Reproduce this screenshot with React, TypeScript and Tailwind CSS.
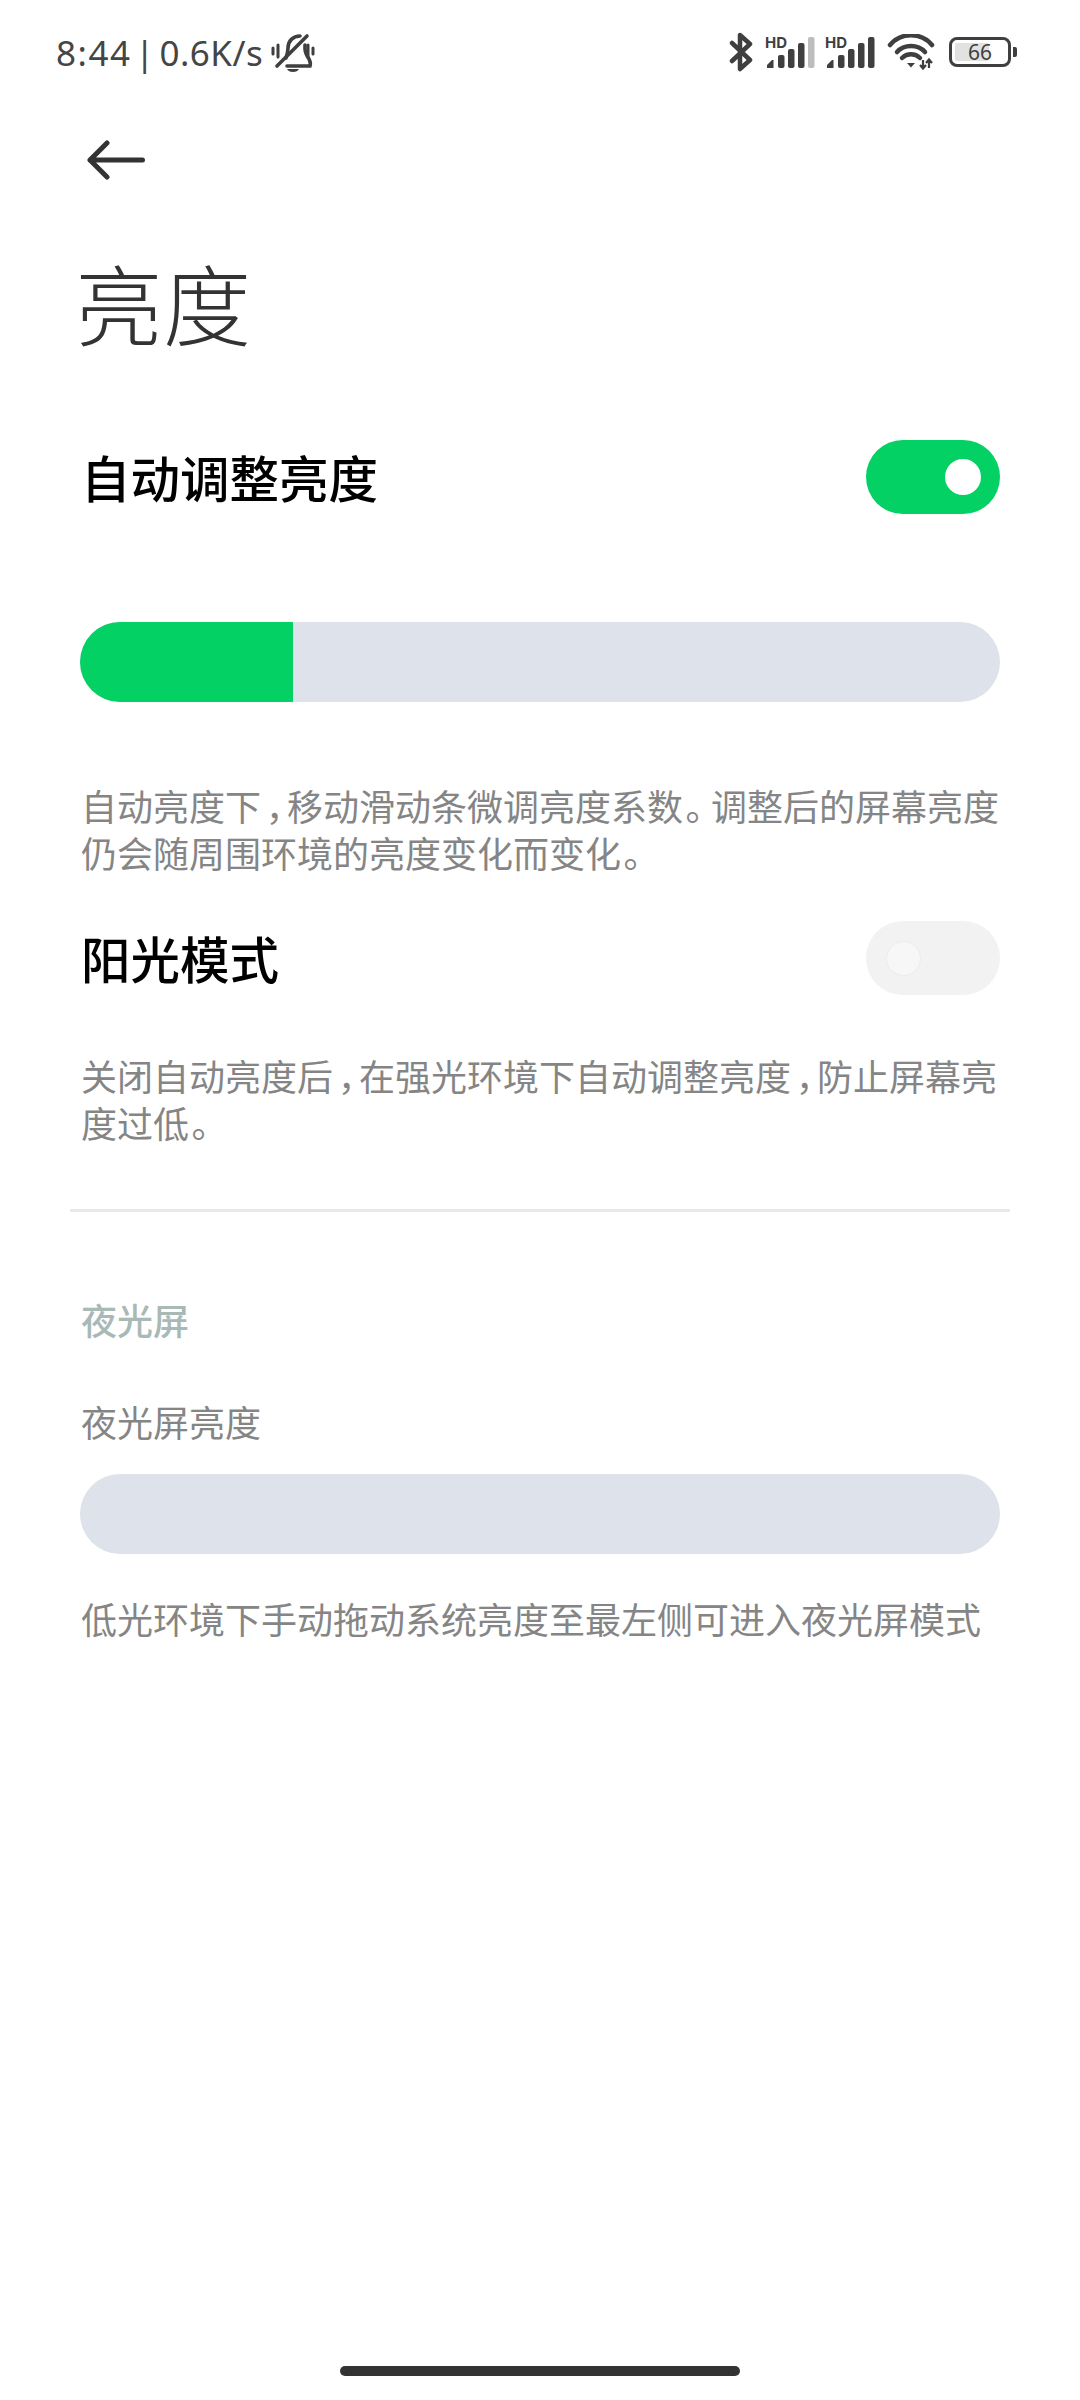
import type { ReactNode } from "react";

const CJK = "font-['Noto_Sans_CJK_SC','Noto_Sans',sans-serif]";

// the reference font has narrow CJK punctuation
function Comma() {
  return <span className="inline-block w-[26px] pl-[7px] [font-feature-settings:'palt']">，</span>;
}

function Period() {
  return <span className="inline-block w-[28px] pl-[2px] [font-feature-settings:'palt']">。</span>;
}

function MuteBell() {
  return (
    <svg width="46" height="42" viewBox="0 0 46 42" fill="none" stroke="#3f3f3f" strokeLinecap="round">
      <path d="M3 17v6M8 14v12M38 14v12M43 17v6" strokeWidth="3" />
      <path d="M16 27c1-3 2-6 2-10 0-7 5-12 12-12M35 14v4c0 4 2 7 4 10 1 2 2 4 1 7H17" strokeWidth="3.600" />
      <path d="M7 35 37 5" strokeWidth="3.600" />
      <path d="M17 38h12c-1 2-3 3-6 3s-5-1-6-3z" fill="#3f3f3f" stroke="none" />
    </svg>
  );
}

function Bluetooth() {
  return (
    <svg width="24" height="40" viewBox="0 0 24 40" fill="none" stroke="#3f3f3f" strokeWidth="4.500" strokeLinecap="round" strokeLinejoin="round">
      <path d="M3 11 21 28 11 37V3l10 9L3 29" />
    </svg>
  );
}

function Signal({ faded }: { faded?: boolean }) {
  const bars = [
    { x: 13, h: 13 },
    { x: 23, h: 19 },
    { x: 33, h: 25 },
  ];
  return (
    <svg width="50" height="34" viewBox="0 0 50 34" className="overflow-visible">
      <text x="0" y="13" fontFamily="Inter, sans-serif" fontWeight="700" fontSize="15" fill="#3f3f3f">HD</text>
      <path d="M2 33v-3l5-5h1.500v8z" fill="#3f3f3f" />
      {bars.map((b) => (
        <rect key={b.x} x={b.x} y={33 - b.h} width="6.500" height={b.h} rx="2" fill="#3f3f3f" />
      ))}
      <rect x="43" y="2" width="6.500" height="31" rx="2" fill={faded ? "#bdbdbd" : "#3f3f3f"} />
    </svg>
  );
}

function Wifi() {
  return (
    <svg width="48" height="36" viewBox="0 0 48 36" fill="none" stroke="#3f3f3f" strokeWidth="4.500" strokeLinecap="round">
      <path d="M3 11C14-2 34-2 45 11" />
      <path d="M10 18C17 10 31 10 38 18" />
      <path d="M15 24C20 19 28 19 33 24" />
      <path d="M20 29h8l-4 4.500z" fill="#3f3f3f" stroke="none" />
      <path d="M36 26v8M33 31l3 3.500 3-3.500M42 34v-8M39 29l3-3.500 3 3.500" strokeWidth="2.200" strokeLinecap="butt" />
    </svg>
  );
}

function Battery() {
  return (
    <div className="flex items-center gap-[2px]">
      <div className="relative w-[62px] h-[30px] rounded-[8px] border-[3.5px] border-[#3f3f3f] p-[3px]">
        <div className="h-full w-[34px] rounded-[2px] bg-[#e2e2e2]" />
        <span className="absolute inset-0 flex items-center justify-center font-['Noto_Sans',sans-serif] text-[21px] leading-none text-[#3f3f3f]">
          66
        </span>
      </div>
      <div className="w-[4px] h-[10px] rounded-r-[2px] bg-[#3f3f3f]" />
    </div>
  );
}

function Toggle({ on }: { on?: boolean }) {
  return (
    <div
      className={
        on
          ? "w-[134px] h-[74px] rounded-full bg-[#03d164] flex items-center justify-end pr-[19px]"
          : "w-[134px] h-[74px] rounded-full bg-[#f2f2f2] flex items-center justify-start pl-[20px]"
      }
    >
      <div className={on ? "w-[36px] h-[36px] rounded-full bg-white" : "w-[35px] h-[35px] rounded-full bg-[#f7f7f7] border border-[#ececec]"} />
    </div>
  );
}

function Slider({ fill }: { fill?: number }) {
  return (
    <div className="ml-[80px] w-[920px] h-[80px] rounded-full bg-[#dee2ea] overflow-hidden">
      {fill ? <div className="h-full bg-[#03d164]" style={{ width: fill }} /> : null}
    </div>
  );
}

function Desc({ children }: { children: ReactNode }) {
  return <div className="pl-[81px] text-[36px] leading-[47px] text-[#858585] whitespace-nowrap">{children}</div>;
}

export default function App() {
  return (
    <div className={`${CJK} relative w-[1080px] h-[2400px] bg-white flex flex-col`}>
      <div className="h-[104px] pl-[56px] pr-[63px] flex items-center justify-between shrink-0">
        <div className="flex items-center gap-[7px]">
          <span className="font-['Noto_Sans',sans-serif] text-[35px] leading-none tracking-[1.5px] [word-spacing:-7px] text-[#454545]">
            8:44 | <span className="tracking-[0.5px]">0.6K/s</span>
          </span>
          <MuteBell />
        </div>
        <div className="flex items-center">
          <Bluetooth />
          <div className="ml-[12px]"><Signal faded /></div>
          <div className="ml-[10px]"><Signal /></div>
          <div className="ml-[12px]"><Wifi /></div>
          <div className="ml-[14px]"><Battery /></div>
        </div>
      </div>

      <div className="pl-[87px] mt-[35px] h-[42px]">
        <svg width="60" height="42" viewBox="0 0 60 42" fill="none" stroke="#333333" strokeWidth="5" strokeLinecap="round" strokeLinejoin="round">
          <path d="M3 21h52.500M20 4 3 21l17 17" />
        </svg>
      </div>

      <h1 className="pl-[75px] mt-[60px] text-[88px] leading-[120px] font-light text-[#333333]">亮度</h1>

      <div className="mt-[79px] pl-[81px] pr-[80px] flex items-center justify-between">
        <span className="text-[49.500px] leading-[74px] font-medium text-black">自动调整亮度</span>
        <Toggle on />
      </div>

      <div className="mt-[108px]"><Slider fill={213} /></div>

      <div className="mt-[80px]">
        <Desc>
          <div>自动亮度下<Comma />移动滑动条微调亮度系数<Period />调整后的屏幕亮度</div>
          <div>仍会随周围环境的亮度变化而变化<Period /></div>
        </Desc>
      </div>

      <div className="mt-[45px] pl-[81px] pr-[80px] flex items-center justify-between">
        <span className="text-[49.500px] leading-[74px] font-medium text-black">阳光模式</span>
        <Toggle />
      </div>

      <div className="mt-[57px]">
        <Desc>
          <div>关闭自动亮度后<Comma />在强光环境下自动调整亮度<Comma />防止屏幕亮</div>
          <div>度过低<Period /></div>
        </Desc>
      </div>

      <div className="mt-[63px] mx-[70px] h-[3px] bg-[#e8e8e8]" />

      <div className="mt-[84px] pl-[81px] text-[36px] leading-[47px] font-medium text-[#a9b9b6]">夜光屏</div>

      <div className="mt-[55px]">
        <Desc>夜光屏亮度</Desc>
      </div>

      <div className="mt-[29px]"><Slider /></div>

      <div className="mt-[41px]">
        <Desc>低光环境下手动拖动系统亮度至最左侧可进入夜光屏模式</Desc>
      </div>

      <div className="absolute bottom-[24px] left-[340px] w-[400px] h-[10px] rounded-full bg-[#333333]" />
    </div>
  );
}
